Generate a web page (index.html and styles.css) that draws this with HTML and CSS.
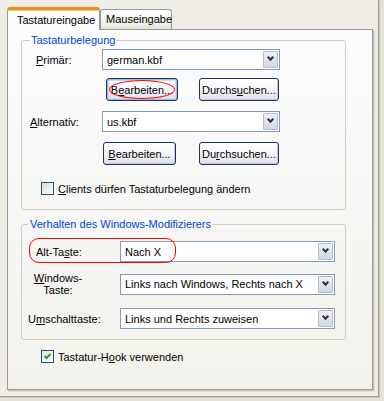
FILE: index.html
```html
<!DOCTYPE html>
<html lang="de">
<head>
    <meta charset="UTF-8">
    <meta name="viewport" content="width=device-width, initial-scale=1.0">
    <title>Tastatureingabe</title>
    <link rel="stylesheet" href="styles.css">
</head>
<body>
    <div class="dialog">
        <div class="tabs">
            <div class="tab tab-active">Tastatureingabe</div>
            <div class="tab tab-mouse">Mauseingabe</div>
        </div>
        <div class="panel">
            <fieldset class="group group-layout">
                <legend>Tastaturbelegung</legend>
                <div class="field">
                    <span class="label label-primary"><u>P</u>rimär:</span>
                    <div class="combo combo-short">
                        <span class="combo-value">german.kbf</span>
                        <span class="combo-arrow"></span>
                    </div>
                </div>
                <div class="buttons">
                    <button class="btn btn-default btn-marked">B<u>e</u>arbeiten...</button>
                    <button class="btn btn-browse">Durchs<u>u</u>chen...</button>
                </div>
                <div class="field field-alt">
                    <span class="label"><u>A</u>lternativ:</span>
                    <div class="combo combo-short">
                        <span class="combo-value">us.kbf</span>
                        <span class="combo-arrow"></span>
                    </div>
                </div>
                <div class="buttons buttons-second">
                    <button class="btn"><u>B</u>earbeiten...</button>
                    <button class="btn btn-browse">Du<u>r</u>chsuchen...</button>
                </div>
                <label class="check check-clients">
                    <span class="box"></span>
                    <span><u>C</u>lients dürfen Tastaturbelegung ändern</span>
                </label>
            </fieldset>

            <fieldset class="group group-modifier">
                <legend>Verhalten des Windows-Modifizierers</legend>
                <div class="field field-mod field-marked">
                    <span class="label label-alt">Alt-Ta<u>s</u>te:</span>
                    <div class="combo combo-long">
                        <span class="combo-value">Nach X</span>
                        <span class="combo-arrow"></span>
                    </div>
                    <span class="marker"></span>
                </div>
                <div class="field field-mod field-win">
                    <span class="label label-win"><u>W</u>indows-<br>Taste:</span>
                    <div class="combo combo-long">
                        <span class="combo-value">Links nach Windows, Rechts nach X</span>
                        <span class="combo-arrow"></span>
                    </div>
                </div>
                <div class="field field-mod field-shift">
                    <span class="label">U<u>m</u>schalttaste:</span>
                    <div class="combo combo-long">
                        <span class="combo-value">Links und Rechts zuweisen</span>
                        <span class="combo-arrow"></span>
                    </div>
                </div>
            </fieldset>

            <label class="check check-hook">
                <span class="box box-checked">
                    <svg width="7" height="7" viewBox="0 0 7 7"><path d="M0.5 3 L2.5 5 L6.5 1" fill="none" stroke="#21a121" stroke-width="2"/></svg>
                </span>
                <span>Tastatur-H<u>o</u>ok verwenden</span>
            </label>
        </div>
    </div>
</body>
</html>
```

FILE: styles.css
```css
html, body {
    margin: 0;
    padding: 0;
}

body {
    width: 384px;
    height: 401px;
    background-color: #e4e2d8;
    font-family: "Liberation Sans", Arial, sans-serif;
    font-size: 11px;
    color: #000;
    overflow: hidden;
}

u {
    text-decoration: underline;
    text-underline-offset: 1px;
}

.dialog {
    width: 379px;
    height: 397px;
    padding: 7px 0 0 7px;
    box-sizing: border-box;
    background-color: #efede5;
    border-right: 1px solid #a19f94;
    border-bottom: 1px solid #a19f94;
    box-shadow: 1px 1px 0 #c4c2b7;
}

/* tabs */
.tabs {
    display: flex;
    align-items: flex-end;
    height: 22px;
    position: relative;
    z-index: 1;
}

.tab {
    height: 20px;
    padding: 0 5px 0 6px;
    line-height: 19px;
    border: 1px solid #919b9c;
    border-bottom: none;
    border-radius: 3px 3px 0 0;
    background: linear-gradient(#ffffff, #f1f0ea 70%, #e4e2d9);
    box-sizing: border-box;
    white-space: nowrap;
}

.tab-mouse {
    width: 72px;
    padding: 0 0 0 5px;
}

.tab-active {
    width: 93px;
    height: 23px;
    padding: 0 0 0 9px;
    line-height: 20px;
    border-top: 3px solid #e68b2c;
    box-shadow: inset 0 1px 0 #ffc83c;
    background: #fcfcfe;
    margin-bottom: -1px;
}

.panel {
    width: 366px;
    height: 361px;
    box-sizing: border-box;
    border: 1px solid #919b9c;
    background: linear-gradient(#fcfcfe, #f7f7f5 50%, #f2f1eb);
    box-shadow: 1px 1px 0 #c3c1b4, 2px 2px 0 #dedcd0;
    padding: 4px 0 0 13px;
}

/* group boxes */
.group {
    width: 325px;
    margin: 0;
    padding: 0;
    box-sizing: border-box;
    border: 1px solid #d0d0bf;
    border-radius: 3px;
}

.group legend {
    margin-left: 0;
    padding: 0 1px;
    line-height: 13px;
    color: #0046d5;
}

.group-layout {
    height: 176px;
    padding: 2px 0 0 8px;
}

.group-modifier {
    height: 122px;
    margin-top: 8px;
    padding: 10px 0 0 6px;
}

.group-modifier legend {
    padding: 0 2px;
}

.field {
    display: flex;
    align-items: center;
}

.label {
    width: 72px;
    flex-shrink: 0;
}

.label-primary {
    padding-left: 6px;
    box-sizing: border-box;
}

.field-alt {
    margin-top: 10px;
}

.field-mod .label {
    width: 92px;
}

.field-mod .label-alt {
    padding-left: 8px;
    box-sizing: border-box;
}

.field-mod .label-win {
    width: 60px;
    margin-right: 32px;
    text-align: center;
    line-height: 12px;
}

.field-win {
    margin-top: 10px;
}

.field-shift {
    margin-top: 12px;
}

.field-marked {
    position: relative;
}

.marker {
    position: absolute;
    left: 1px;
    top: -3px;
    width: 147px;
    height: 25px;
    box-sizing: border-box;
    border: 1px solid #ff0000;
    border-radius: 10px;
}

/* combo boxes */
.combo {
    display: flex;
    align-items: center;
    height: 21px;
    box-sizing: border-box;
    border: 1px solid #7f9db9;
    background: #fff;
    padding: 1px;
}

.combo-short {
    width: 178px;
}

.combo-long {
    width: 215px;
}

.combo-value {
    flex: 1;
    padding-left: 3px;
    white-space: nowrap;
}

.combo-arrow {
    width: 15px;
    height: 17px;
    box-sizing: border-box;
    border: 1px solid #b5bdd2;
    border-radius: 1px;
    background: linear-gradient(#eef0f6, #d3d6e2);
    position: relative;
}

.combo-arrow::after {
    content: "";
    position: absolute;
    left: 4px;
    top: 3px;
    width: 3px;
    height: 3px;
    border-right: 2px solid #333;
    border-bottom: 2px solid #333;
    transform: rotate(45deg);
}

/* buttons */
.buttons {
    display: flex;
    margin-top: 8px;
    padding-left: 76px;
}

.buttons-second {
    margin-top: 10px;
    padding-left: 73px;
}

.btn {
    width: 73px;
    height: 23px;
    padding: 0;
    font-family: inherit;
    font-size: 11px;
    color: #000;
    border: 1px solid #1e3560;
    border-radius: 3px;
    background: linear-gradient(#ffffff, #f4f4f8 60%, #dcdce6);
    box-shadow: inset -1px -1px 0 #c9c9d4;
    position: relative;
}

.btn-default {
    width: 72px;
    box-shadow: inset 0 0 0 1px #9eb8e6, inset 0 0 0 2px #cfdcf4;
}

.btn-browse {
    width: 80px;
    margin-left: 23px;
}

.btn-default + .btn-browse {
    margin-left: 21px;
}

.btn-marked::after {
    content: "";
    position: absolute;
    left: 2px;
    top: 1px;
    right: 2px;
    bottom: 1px;
    border: 1px solid #ff0000;
    border-radius: 50%;
}

/* check boxes */
.check {
    display: flex;
    align-items: center;
    gap: 4px;
}

.check-clients {
    margin-top: 17px;
    padding-left: 11px;
}

.check-hook {
    margin-top: 10px;
    padding-left: 20px;
}

.box {
    width: 13px;
    height: 13px;
    box-sizing: border-box;
    border: 1px solid #1c5180;
    background: linear-gradient(135deg, #dcdcd7, #fbfbf9);
    display: flex;
    align-items: center;
    justify-content: center;
}

.box-checked {
    background: linear-gradient(135deg, #e6e6e2, #fbfbf9);
}
```
